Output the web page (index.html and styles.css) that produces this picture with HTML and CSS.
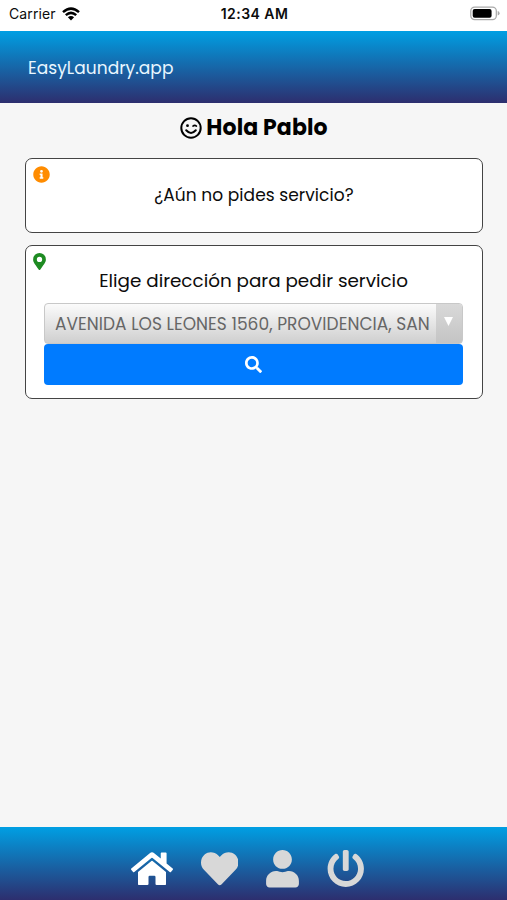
FILE: index.html
```html
<!DOCTYPE html>
<html lang="es">
<head>
<meta charset="utf-8">
<title>EasyLaundry.app</title>
<link rel="stylesheet" href="styles.css">
</head>
<body>
<div class="status">
  <div class="carrier"><span>Carrier</span>
    <svg class="wifi" viewBox="0 0 18 14" fill="none" stroke="#000" stroke-width="2.5"><path d="M1 5.1Q9-1.9 17 5.1M3.8 8.1Q9 3.6 14.2 8.1"/><path d="M5.9 10.2Q9 7.7 12.1 10.2L9 13.5Z" fill="#000" stroke="none"/></svg>
  </div>
  <span class="time">12:34 AM</span>
  <svg class="battery" viewBox="0 0 31 15"><rect x=".8" y=".8" width="26.4" height="13" rx="4" fill="#fff" stroke="#aaa" stroke-width="1.3"/><rect x="2.8" y="2.8" width="19.5" height="9" rx="2"/><path d="M28.6 5q2 .6 2 2.3t-2 2.3z" fill="#aaa"/></svg>
</div>
<header class="header"><span class="brand">EasyLaundry.app</span></header>
<main class="main">
  <h1 class="greeting">
    <svg class="wink" viewBox="0 0 22 22" fill="none" stroke="#000" stroke-width="2" stroke-linecap="round"><circle cx="11" cy="11" r="9.7"/><path d="M6.2 13.3q4.8 5.2 9.6 0"/><path d="M12.9 9.100q1.800-1.500 3.600 0" stroke-width="1.500"/><circle cx="7.500" cy="8.700" r="1.400" fill="#000" stroke="none"/></svg>
    <span class="hello">Hola Pablo</span>
  </h1>
  <section class="card notice">
    <svg class="corner info" viewBox="0 0 512 512" fill="#ff8c00"><path d="M256 8C119 8 8 119 8 256s111 248 248 248 248-111 248-248S393 8 256 8zm0 110a42 42 0 1 1 0 84 42 42 0 0 1 0-84zm56 254c0 7-5 12-12 12h-88c-7 0-12-5-12-12v-24c0-7 5-12 12-12h12v-64h-12c-7 0-12-5-12-12v-24c0-7 5-12 12-12h64c7 0 12 5 12 12v100h12c7 0 12 5 12 12z"/></svg>
    <p class="question">¿Aún no pides servicio?</p>
  </section>
  <section class="card request">
    <svg class="corner pin" viewBox="0 0 384 512" fill="#1e8b22"><path d="M172 502C27 291 0 270 0 192a192 192 0 0 1 384 0c0 78-27 99-172 310-10 13-30 13-40 0zm20-230a80 80 0 1 0 0-160 80 80 0 0 0 0 160z"/></svg>
    <p class="choose">Elige dirección para pedir servicio</p>
    <div class="select"><span class="value"><span class="address">AVENIDA LOS LEONES 1560, PROVIDENCIA, SAN</span></span><span class="arrow"><svg viewBox="0 0 9 9" fill="#fff"><path d="M0 0h9L4.5 9z"/></svg></span></div>
    <button class="search" aria-label="Buscar"><svg viewBox="0 0 512 512" fill="#fff"><path d="M505 442.700 405.300 343c-4.500-4.500-10.600-7-17-7H372c27.600-35.300 44-79.700 44-128C416 93.100 322.900 0 208 0S0 93.100 0 208s93.100 208 208 208c48.300 0 92.700-16.400 128-44v16.300c0 6.400 2.500 12.500 7 17l99.700 99.700c9.400 9.400 24.600 9.400 33.900 0l28.300-28.300c9.400-9.400 9.400-24.600.1-34zM208 336c-70.700 0-128-57.200-128-128 0-70.700 57.200-128 128-128 70.700 0 128 57.200 128 128 0 70.700-57.200 128-128 128z"/></svg></button>
  </section>
</main>
<nav class="nav">
  <svg class="home" viewBox="0 0 576 512" fill="#fff"><path d="M280.400 148.300 96 300.100V464a16 16 0 0 0 16 16l112.100-.3a16 16 0 0 0 15.900-16V368a16 16 0 0 1 16-16h64a16 16 0 0 1 16 16v95.600a16 16 0 0 0 16 16.100L464 480a16 16 0 0 0 16-16V300L295.700 148.300a12.200 12.200 0 0 0-15.300 0zM571.600 251.500 488 182.600V44a12 12 0 0 0-12-12h-56a12 12 0 0 0-12 12v72.600L318.500 43a48 48 0 0 0-61 0L4.300 251.500a12 12 0 0 0-1.600 16.900l25.500 31a12 12 0 0 0 16.900 1.600l235.200-193.700a12.200 12.200 0 0 1 15.300 0L530.900 301a12 12 0 0 0 16.900-1.600l25.500-31a12 12 0 0 0-1.700-16.900z"/></svg>
  <svg class="icon" viewBox="0 0 512 512"><path d="M462.300 62.600C407.500 15.900 326 24.300 275.700 76.200L256 96.500l-19.700-20.300C186.100 24.300 104.500 15.900 49.700 62.600c-62.800 53.600-66.100 149.800-9.900 207.900l193.500 199.800c12.500 12.900 32.800 12.900 45.300 0l193.500-199.800c56.300-58.100 53-154.300-9.800-207.900z"/></svg>
  <svg class="user" viewBox="0 0 448 512"><path d="M224 256c70.700 0 128-57.300 128-128S294.700 0 224 0 96 57.300 96 128s57.300 128 128 128zm89.600 32h-16.700c-22.200 10.200-46.900 16-72.900 16s-50.600-5.800-72.900-16h-16.700C60.200 288 0 348.200 0 422.400V464c0 26.500 21.500 48 48 48h352c26.500 0 48-21.500 48-48v-41.600c0-74.200-60.200-134.400-134.400-134.400z"/></svg>
  <svg class="icon" viewBox="0 0 512 512"><path d="M400 54.100c63 45 104 118.600 104 201.900 0 136.800-110.800 247.700-247.500 248C120 504.300 8.200 393 8 256.400 7.900 173.100 48.900 99.300 111.800 54.200c11.700-8.300 28-4.800 35 7.700L162.600 90c5.900 10.500 3.100 23.800-6.600 31-41.500 30.800-68 79.600-68 134.900-.1 92.300 74.500 168.100 168 168.100 91.600 0 168.600-74.200 168-169.100-.3-51.800-24.700-101.800-68.100-134-9.700-7.200-12.400-20.500-6.500-30.900l15.800-28.100c7-12.400 23.200-16.100 34.800-7.800zM296 264V24c0-13.300-10.700-24-24-24h-32c-13.300 0-24 10.700-24 24v240c0 13.300 10.700 24 24 24h32c13.300 0 24-10.700 24-24z"/></svg>
</nav>
</body>
</html>
```
FILE: styles.css
```css
* { box-sizing: border-box; }
body {
  margin: 0;
  height: 900px;
  display: flex;
  flex-direction: column;
  background: #f6f6f6;
  color: #0c0c0c;
  font-family: Poppins, Inter, "Liberation Sans", sans-serif;
  overflow: hidden;
}
svg { display: block; flex: none; }
p, h1 { margin: 0; }
.status {
  height: 31px;
  padding: 0 7px 4px 9px;
  display: grid;
  grid-template-columns: 1fr auto 1fr;
  align-items: center;
  background: #fff;
  font: 14px/20px Inter, sans-serif;
}
.carrier { display: flex; gap: 6px; align-items: center; letter-spacing: .1px; }
.wifi { width: 18px; height: 14px; }
.time { font-weight: 600; font-size: 14px; letter-spacing: .45px; }
.battery { width: 30px; height: 15px; justify-self: end; }
.header {
  height: 72px;
  padding: 1px 28px 0;
  display: flex;
  align-items: center;
  background: linear-gradient(#009fe3, #2d2e6e);
  color: #e9f7ff;
}
.brand { font-size: 17px; letter-spacing: .05px; }
.main { flex: 1; padding: 11px 24px 0 25px; }
.greeting {
  height: 27px;
  display: flex;
  align-items: center;
  justify-content: center;
  gap: 4px;
  font-size: 22px;
  font-weight: 700;
  color: #000;
}
.hello { letter-spacing: .1px; }
.wink { width: 22px; height: 22px; }
.card {
  position: relative;
  background: #fff;
  border: 1.5px solid #444;
  border-radius: 7px;
  text-align: center;
}
.corner { position: absolute; left: 6.500px; top: 6.500px; }
.info { width: 17px; height: 17px; }
.pin { width: 13px; height: 17px; }
.notice { height: 75px; margin-top: 17px; padding-top: 23px; }
.question { font-size: 17px; letter-spacing: .07px; line-height: 27px; }
.request { height: 154px; margin-top: 12px; padding: 21px 19px 0 18px; }
.choose { height: 36px; font-size: 18.350px; line-height: 27px; white-space: nowrap; }
.select {
  height: 41px;
  display: flex;
  border: 1px solid #c8c8c8;
  border-radius: 4px;
  background: linear-gradient(#fbfbfb, #cfcfcf);
  overflow: hidden;
  color: #666;
}
.value { flex: 1; padding-left: 10px; text-align: left; font-size: 17px; letter-spacing: .04px; line-height: 40px; white-space: nowrap; }
.arrow { width: 26px; padding: 13px 0 0 8px; background: linear-gradient(#d9d9d9, #c4c4c4); }
.arrow svg { width: 9px; height: 9px; }
.search {
  width: 100%;
  height: 41px;
  display: flex;
  align-items: center;
  justify-content: center;
  border: 0;
  border-radius: 4px;
  background: #007bff;
}
.search svg { width: 17px; height: 17px; }
.nav {
  height: 73px;
  padding: 11px 12px 0 0;
  display: flex;
  align-items: center;
  justify-content: center;
  gap: 28px;
  background: linear-gradient(#009fe3, #2d2e6e);
  fill: #d8d8d8;
}
.home { width: 42px; height: 37.500px; }
.icon { width: 37.500px; height: 37.500px; }
.user { width: 33px; height: 37.500px; }
```
